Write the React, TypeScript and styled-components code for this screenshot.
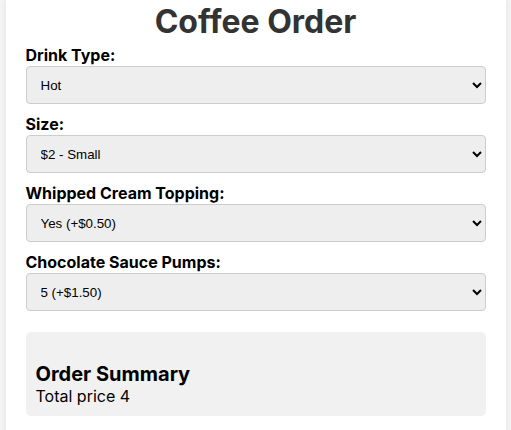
import React, { useState } from "react";
import styled, { createGlobalStyle } from "styled-components";

const Global = createGlobalStyle`
  html, body { margin: 0; padding: 0; background: #f4f4f4; }
  body { font-family: Inter, "Noto Sans", sans-serif; }
`;

const Card = styled.div`
  max-width: 500px;
  margin: 0 auto;
  min-height: 430px;
  box-sizing: border-box;
  background: #fff;
  padding: 2px 20px 20px;
  box-shadow: 0 0 6px rgba(0, 0, 0, 0.08);
`;

const Title = styled.h1`
  margin: 0 0 4px;
  text-align: center;
  color: #333;
  font-size: 32px;
  font-weight: 700;
`;

const Group = styled.div`
  margin-bottom: 10px;
`;

const Label = styled.label`
  display: block;
  font-weight: 700;
  font-size: 16px;
  line-height: 20px;
  color: #000;
  margin-bottom: 1px;
`;

const Select = styled.select`
  display: block;
  width: 100%;
  height: 38px;
  box-sizing: border-box;
  padding: 0 10px;
  background: #eee;
  border: 1px solid #ccc;
  border-radius: 4px;
  font-family: "Liberation Sans", Arial, sans-serif;
  font-size: 13.333px;
  color: #000;
`;

const Summary = styled.div`
  margin-top: 21px;
  background: #f1f1f1;
  border-radius: 5px;
  padding: 10px;
`;

const SummaryTitle = styled.h3`
  margin: 20px 0 0;
  font-size: 20px;
  font-weight: 700;
  color: #000;
`;

const Total = styled.p`
  margin: 0;
  font-size: 16px;
  color: #000;
`;

export default function App() {
  const [drink, setDrink] = useState("hot");
  const [size, setSize] = useState("small");
  const [cream, setCream] = useState("yes");
  const [pumps, setPumps] = useState("5");
  return (
    <>
      <Global />
      <Card>
        <Title>Coffee Order</Title>
        <Group>
          <Label>Drink Type:</Label>
          <Select value={drink} onChange={(e) => setDrink(e.target.value)}>
            <option value="hot">Hot</option>
            <option value="cold">Cold</option>
          </Select>
        </Group>
        <Group>
          <Label>Size:</Label>
          <Select value={size} onChange={(e) => setSize(e.target.value)}>
            <option value="small">$2 - Small</option>
            <option value="medium">$3 - Medium</option>
            <option value="large">$4 - Large</option>
          </Select>
        </Group>
        <Group>
          <Label>Whipped Cream Topping:</Label>
          <Select value={cream} onChange={(e) => setCream(e.target.value)}>
            <option value="yes">Yes (+$0.50)</option>
            <option value="no">No</option>
          </Select>
        </Group>
        <Group>
          <Label>Chocolate Sauce Pumps:</Label>
          <Select value={pumps} onChange={(e) => setPumps(e.target.value)}>
            <option value="0">0</option>
            <option value="5">5 (+$1.50)</option>
          </Select>
        </Group>
        <Summary>
          <SummaryTitle>Order Summary</SummaryTitle>
          <Total>Total price 4</Total>
        </Summary>
      </Card>
    </>
  );
}
